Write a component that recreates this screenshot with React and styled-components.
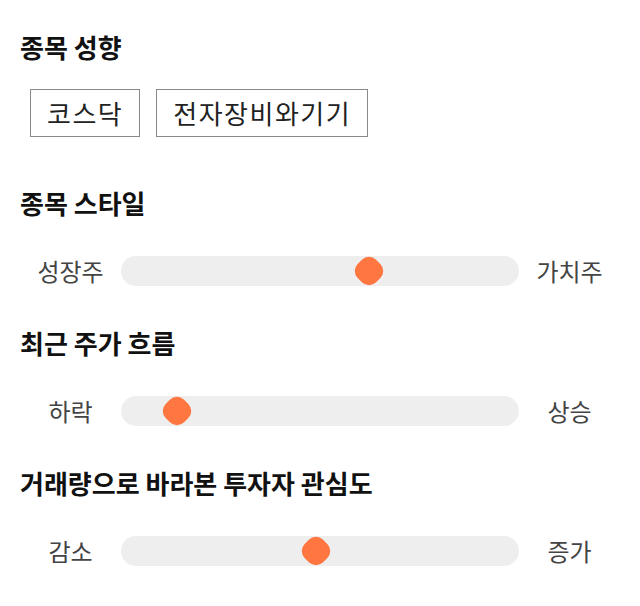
import React from "react";
import styled, { createGlobalStyle } from "styled-components";

const GlobalStyle = createGlobalStyle`
  body {
    margin: 0;
    background: #fff;
    font-family: "Noto Sans CJK KR", "Noto Sans", sans-serif;
  }
`;

const Page = styled.div`
  width: 640px;
  padding-top: 30px;
`;

const Section = styled.section`
  margin-bottom: ${(p) => p.$after || 40}px;
`;

const Heading = styled.h2`
  margin: 0 0 ${(p) => p.$gap || 36}px;
  padding-left: 20px;
  font-size: 26px;
  line-height: 34px;
  font-weight: 700;
  color: #111;
`;

const ChipRow = styled.div`
  display: flex;
  gap: 16px;
  padding-left: 30px;
`;

const Chip = styled.button`
  height: 48px;
  padding: 0 16px;
  border: 1px solid #8a8a8a;
  background: #fff;
  color: #222;
  font-family: inherit;
  font-size: 26px;
  letter-spacing: 1.5px;
  line-height: 1;
`;

const SliderRow = styled.div`
  display: grid;
  grid-template-columns: 81px 1fr 81px;
  align-items: center;
  column-gap: 10px;
  padding: 0 30px;
`;

const Label = styled.span`
  text-align: center;
  font-size: 24px;
  line-height: 30px;
  color: #444;
`;

const Track = styled.div`
  position: relative;
  height: 30px;
  border-radius: 15px;
  background: #eeeeee;
`;

const Thumb = styled.div`
  position: absolute;
  top: 50%;
  width: 26px;
  height: 26px;
  border-radius: 10px;
  background: #ff7641;
  transform: translate(-50%, -50%) rotate(45deg);
`;

const sliders = [
  { title: "종목 스타일", left: "성장주", right: "가치주", value: 0.634 },
  { title: "최근 주가 흐름", left: "하락", right: "상승", value: 0.111 },
  { title: "거래량으로 바라본 투자자 관심도", left: "감소", right: "증가", value: 0.49 },
];

const Slider = ({ left, right, value }) => (
  <SliderRow>
    <Label>{left}</Label>
    <Track>
      <Thumb style={{ left: `calc(15px + (100% - 30px) * ${value})` }} />
    </Track>
    <Label>{right}</Label>
  </SliderRow>
);

const App = () => {
  return (
    <Page>
      <GlobalStyle />
      <Section $after={49}>
        <Heading $gap={25}>종목 성향</Heading>
        <ChipRow>
          <Chip>코스닥</Chip>
          <Chip>전자장비와기기</Chip>
        </ChipRow>
      </Section>
      {sliders.map((s) => (
        <Section key={s.title}>
          <Heading>{s.title}</Heading>
          <Slider left={s.left} right={s.right} value={s.value} />
        </Section>
      ))}
    </Page>
  );
};

export default App;
